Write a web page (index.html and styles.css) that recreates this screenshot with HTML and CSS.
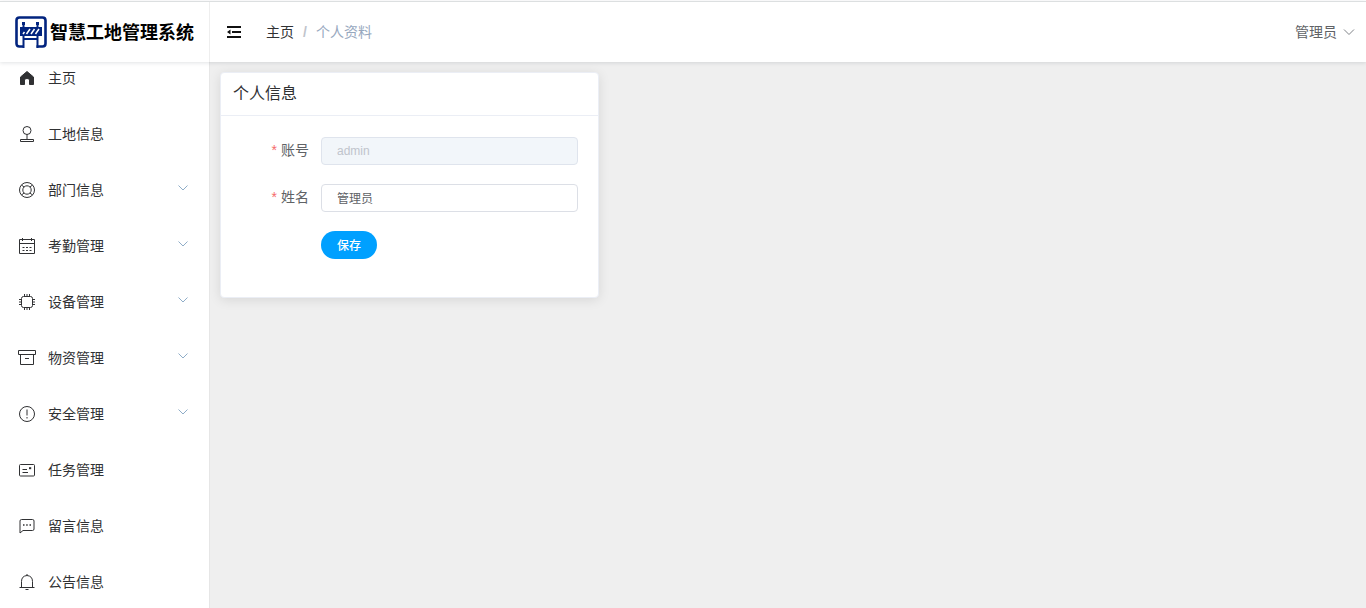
FILE: index.html
```
<!DOCTYPE html>
<html lang="zh-CN">
<head>
  <meta charset="UTF-8">
  <meta name="viewport" content="width=device-width, initial-scale=1.0">
  <title>智慧工地管理系统</title>
  <link rel="stylesheet" href="styles.css">
</head>
<body>
  <header class="header">
    <a class="logo" href="#">
      <svg class="logo-icon" viewBox="0 0 32 32" fill="none" stroke="#02247f" stroke-width="2.600">
        <path d="M8.500 30.500H4.500Q1.500 30.500 1.500 27.500V4.500Q1.500 1.500 4.500 1.500H27.500Q30.500 1.500 30.500 4.500V27.500Q30.500 30.500 27.500 30.500H21.500"/>
        <path d="M8.500 6V9M22.500 6V9" stroke-width="3"/>
        <path d="M8.500 9V12M22.500 9V12M8.500 19V32M22.500 19V32M8.500 23H22.500" stroke-width="2"/>
        <rect x="5" y="11" width="22" height="9" fill="#02247f" stroke="none"/>
        <path d="M8 18L9.500 16M11.500 18L15 13M16 18L19.500 13M20.500 18L24 13" stroke="#fff" stroke-width="1.500"/>
      </svg>
      <span>智慧工地管理系统</span>
    </a>
    <div class="navbar">
      <button class="fold" type="button" aria-label="折叠菜单">
        <svg viewBox="0 0 14 12" fill="#111">
          <path d="M0 0H14V2H0ZM5 5H14V7H5ZM0 10H14V12H0ZM0 6L3.500 3.500V8.500Z"/>
        </svg>
      </button>
      <nav class="breadcrumb">
        <a href="#">主页</a>
        <span class="separator">/</span>
        <span class="current">个人资料</span>
      </nav>
      <button class="user" type="button">
        <span>管理员</span>
        <svg class="arrow" viewBox="0 0 12 12"><path d="M1 3.500L6 8.500L11 3.500"/></svg>
      </button>
    </div>
  </header>

  <div class="container">
    <aside class="sidebar">
      <ul class="menu">
        <li>
          <a class="menu-item" href="#">
            <svg class="icon" viewBox="0 0 18 18"><path d="M9 2.500L2.500 8V15.500H6.500V11Q6.500 9.500 9 9.500Q11.500 9.500 11.500 11V15.500H15.500V8Z" fill="#303133"/></svg>
            <span>主页</span>
          </a>
        </li>
        <li>
          <a class="menu-item" href="#">
            <svg class="icon" viewBox="0 0 18 18"><circle cx="9" cy="5.500" r="4"/><path d="M9 9.500V14M2.500 16.500V14.500H15.500V16.500Z"/></svg>
            <span>工地信息</span>
          </a>
        </li>
        <li>
          <button class="menu-item" type="button">
            <svg class="icon" viewBox="0 0 18 18"><circle cx="9" cy="9" r="7.500"/><circle cx="9" cy="9" r="4.200"/><path d="M3.500 4L6 6M14.500 4L12 6M3.500 14L6 12M14.500 14L12 12"/></svg>
            <span>部门信息</span>
            <svg class="arrow" viewBox="0 0 12 12"><path d="M1.500 3.500L6 8L10.500 3.500"/></svg>
          </button>
        </li>
        <li>
          <button class="menu-item" type="button">
            <svg class="icon" viewBox="0 0 18 18"><path d="M1.500 2.500H16.500V16.500H1.500ZM1.500 6.500H16.500M4.500 1V4M13.500 1V4M4.500 10.500H6.500M8 10.500H10M11.500 10.500H13.500M4.500 13.500H6.500M8 13.500H10M11.500 13.500H13.500"/></svg>
            <span>考勤管理</span>
            <svg class="arrow" viewBox="0 0 12 12"><path d="M1.500 3.500L6 8L10.500 3.500"/></svg>
          </button>
        </li>
        <li>
          <button class="menu-item" type="button">
            <svg class="icon" viewBox="0 0 18 18"><rect x="3.500" y="3.500" width="11" height="11" rx="2"/><path d="M6.500 1V3.500M9 1V3.500M11.500 1V3.500M6.500 14.500V17M9 14.500V17M11.500 14.500V17M1 6.500H3.500M1 9H3.500M1 11.500H3.500M14.500 6.500H17M14.500 9H17M14.500 11.500H17"/></svg>
            <span>设备管理</span>
            <svg class="arrow" viewBox="0 0 12 12"><path d="M1.500 3.500L6 8L10.500 3.500"/></svg>
          </button>
        </li>
        <li>
          <button class="menu-item" type="button">
            <svg class="icon" viewBox="0 0 18 18"><path d="M.5 1.500H17.500V5.500H.5ZM2.500 5.500V15.500H15.500V5.500M7 9.500H11"/></svg>
            <span>物资管理</span>
            <svg class="arrow" viewBox="0 0 12 12"><path d="M1.500 3.500L6 8L10.500 3.500"/></svg>
          </button>
        </li>
        <li>
          <button class="menu-item" type="button">
            <svg class="icon" viewBox="0 0 18 18"><circle cx="9" cy="9" r="7.500"/><path d="M9 4.500V10.500M9 12V13.500"/></svg>
            <span>安全管理</span>
            <svg class="arrow" viewBox="0 0 12 12"><path d="M1.500 3.500L6 8L10.500 3.500"/></svg>
          </button>
        </li>
        <li>
          <a class="menu-item" href="#">
            <svg class="icon" viewBox="0 0 18 18"><rect x="1.500" y="3.500" width="15" height="11.500" rx="1"/><path d="M4.500 8.500H9M4.500 11.500H10"/><path d="M11 7.200H13.200" stroke-width="2"/></svg>
            <span>任务管理</span>
          </a>
        </li>
        <li>
          <a class="menu-item" href="#">
            <svg class="icon" viewBox="0 0 18 18"><path d="M2 16V4Q2 2.500 3.500 2.500H14.500Q16 2.500 16 4V12Q16 13.500 14.500 13.500H5Z"/><path d="M5 8H6.500M8.200 8H9.700M11.500 8H13" stroke-width="1.500"/></svg>
            <span>留言信息</span>
          </a>
        </li>
        <li>
          <a class="menu-item" href="#">
            <svg class="icon" viewBox="0 0 18 18"><path d="M1.500 14.500H16.500M3.500 14.500V8.500Q3.500 3 9 2.500Q14.500 3 14.500 8.500V14.500M9 1V2.500M7.500 16.500H10.500"/></svg>
            <span>公告信息</span>
          </a>
        </li>
      </ul>
    </aside>

    <main class="main">
      <section class="card">
        <h2 class="card-header">个人信息</h2>
        <form class="form">
          <div class="form-item">
            <label for="username">账号</label>
            <input id="username" type="text" value="admin" disabled>
          </div>
          <div class="form-item">
            <label for="name">姓名</label>
            <input id="name" type="text" value="管理员" required>
          </div>
          <div class="form-actions">
            <button class="save" type="button">保存</button>
          </div>
        </form>
      </section>
    </main>
  </div>
</body>
</html>
```
FILE: styles.css
```
* {
  box-sizing: border-box;
}

body {
  display: flex;
  flex-direction: column;
  height: 100vh;
  margin: 0;
  padding-top: 1px;
  overflow: hidden;
  font-family: "Liberation Sans", "Noto Sans CJK SC", sans-serif;
  font-size: 14px;
  color: #303133;
}

a {
  color: inherit;
  text-decoration: none;
}

button,
input {
  font-family: inherit;
}

button {
  border: none;
  background: none;
  cursor: pointer;
}

/* Header */
.header {
  position: relative;
  z-index: 1;
  display: flex;
  flex-shrink: 0;
  height: 61px;
  border-top: 1px solid #dcdfe0;
  background: #fff;
  box-shadow: 0 1px 4px rgba(0, 21, 41, 0.12);
}

.logo {
  display: flex;
  align-items: center;
  gap: 3px;
  width: 210px;
  padding-left: 15px;
  border-right: 1px solid #eee;
  font-size: 18px;
  font-weight: bold;
  color: #000;
  white-space: nowrap;
}

.logo-icon {
  width: 32px;
  height: 32px;
}

.navbar {
  display: flex;
  flex: 1;
  align-items: center;
  padding: 0 11px 0 17px;
}

.logo span,
.breadcrumb,
.user span,
.menu-item span {
  padding-bottom: 2px;
}

.fold {
  display: flex;
  padding: 0 0 1px;
}

.fold svg {
  width: 14px;
  height: 12px;
}

.breadcrumb {
  display: flex;
  align-items: baseline;
  margin-left: 25px;
}

.separator {
  margin: 0 9px;
  font-weight: bold;
  color: #c0c4cc;
}

.current {
  color: #97a8be;
}

.user {
  display: flex;
  align-items: center;
  gap: 6px;
  margin-left: auto;
  padding: 0;
  font-size: 14px;
  color: #606266;
}

.arrow {
  width: 12px;
  height: 12px;
  fill: none;
  stroke: #808388;
}

/* Sidebar */
.container {
  display: flex;
  flex: 1;
  min-height: 0;
}

.sidebar {
  width: 210px;
  border-right: 1px solid #e6e6e6;
  background: #fff;
}

.menu {
  margin: -12px 0 0;
  padding: 0;
  list-style: none;
}

.menu-item {
  display: flex;
  align-items: center;
  gap: 12px;
  width: 100%;
  height: 56px;
  padding: 0 20px 0 18px;
  font-size: 14px;
  color: #303133;
}

.icon {
  width: 18px;
  height: 18px;
  fill: none;
  stroke: #303133;
}

.menu-item .arrow {
  margin: 0 0 4px auto;
  stroke: #8fadc8;
}

/* Content */
.main {
  flex: 1;
  padding: 10px;
  background: #efefef;
}

.card {
  width: 33.33%;
  border: 1px solid #ebeef5;
  border-radius: 4px;
  background: #fff;
  box-shadow: 0 2px 12px rgba(0, 0, 0, 0.1);
}

.card-header {
  margin: 0;
  padding: 9px 12px;
  border-bottom: 1px solid #ebeef5;
  font-size: 16px;
  font-weight: normal;
  line-height: 24px;
}

.form {
  display: flex;
  flex-direction: column;
  gap: 19px;
  padding: 21px 20px 38px;
}

.form-item {
  display: flex;
}

.form-item label {
  width: 80px;
  padding-right: 12px;
  font-size: 14px;
  line-height: 26px;
  text-align: right;
  color: #606266;
}

.form-item label::before {
  content: "*";
  margin-right: 4px;
  color: #f56c6c;
}

.form-item input {
  flex: 1;
  min-width: 0;
  height: 28px;
  padding: 0 15px 1px;
  border: 1px solid #dcdfe6;
  border-radius: 4px;
  font-size: 12px;
  color: #606266;
  background: #fff;
}

.form-item input:disabled {
  border-color: #dfe4ed;
  color: #c0c4cc;
  background: #f2f6fa;
}

.form-actions {
  padding-left: 80px;
}

.save {
  display: block;
  height: 28px;
  padding: 0 16px 2px;
  border-radius: 14px;
  font-size: 12px;
  font-weight: 500;
  color: #fff;
  background: #00a0ff;
}
```
